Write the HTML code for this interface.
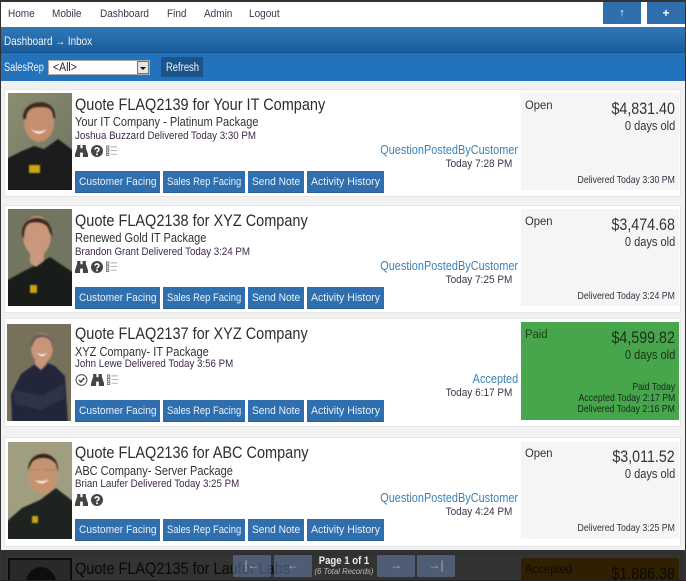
<!DOCTYPE html>
<html><head><meta charset="utf-8"><style>
html,body{margin:0;padding:0;overflow:hidden}
body{width:686px;height:581px;background:#f1f1f1;font-family:"Liberation Sans",sans-serif;color:#333}
#p{position:absolute;left:0;top:0;width:686px;height:581px;overflow:hidden;background:#f1f1f1}
.a{position:absolute}
.ph{position:absolute}
.ph g{filter:blur(.7px)}
.t{position:absolute;white-space:nowrap;line-height:20px;height:20px;transform-origin:0 50%;transform:scaleX(.91)}
.r{transform-origin:100% 50%}
.card{position:absolute;left:4px;width:677px;background:#fff;border:1px solid #e6e6e6;box-sizing:border-box}
.panel{position:absolute;left:521px;width:158px;height:97px;background:#f5f5f5}
.btn{position:absolute;height:22px;background:#2f6fad;border-bottom:1px solid #285f96;box-sizing:border-box}
.nav{font-size:11px;color:#3d3350;top:4px}
.bt{font-size:11.2px;color:#e8f1fa}
.sr{transform:scaleX(.84)}
.ah{transform:scaleX(.94)}
.ti{font-size:16.2px;color:#2d2d2d;transform:scaleX(.895)}
.su{font-size:12.8px;color:#333;transform:scaleX(.86)}
.re{font-size:10.7px;color:#3f2b47}
.st{font-size:13px;color:#3a82b8;transform:scaleX(.84)}
.tm{font-size:11px;color:#3f3348}
.op{font-size:12.4px;color:#333}
.am{font-size:16.4px;color:#333;transform:scaleX(.87)}
.da{font-size:13px;color:#333;transform:scaleX(.85)}
.de{font-size:10.4px;color:#3a2e40;transform:scaleX(.84)}
.foot{position:absolute;left:0;top:550px;width:686px;height:31px;background:rgba(0,0,0,.8)}
.pg{position:absolute;top:555px;height:22px;width:38px;background:rgba(100,125,170,.55);color:#a9b2c0;font-size:12px;line-height:21px;text-align:center}
</style></head><body><div id="p">
<svg width="0" height="0" style="position:absolute"><defs>
<symbol id="bino" viewBox="0 0 12 11"><path fill="#444" d="M2 0h3v3h2V0h3v2.5l2 6V11H7.3V7H4.7v4H0V8.5l2-6z"/></symbol>
<symbol id="q" viewBox="0 0 12 12"><circle cx="6" cy="6" r="6" fill="#444"/><path fill="none" stroke="#fff" stroke-width="1.6" d="M4 4.6C4 2.4 8 2.4 8 4.6 8 6 6 6 6 7.5"/><rect x="5.1" y="8.5" width="1.8" height="1.7" fill="#fff"/></symbol>
<symbol id="l" viewBox="0 0 12 12"><g fill="none" stroke="#777"><rect x=".5" y=".5" width="2.5" height="2.5"/><rect x=".5" y="4.5" width="2.5" height="2.5"/><rect x=".5" y="8.5" width="2.5" height="2.5"/></g><path stroke="#aaa" d="M5 1.5h7M5 5.5h7M5 9.5h7"/></symbol>
<symbol id="c" viewBox="0 0 12 12"><circle cx="6" cy="6" r="5.4" fill="none" stroke="#444"/><path fill="none" stroke="#444" stroke-width="1.5" d="M3.4 6l2 2 3.4-4"/></symbol>
<linearGradient id="w" x1="0" x2="1" y1="0" y2="1"><stop offset="0" stop-color="#8b8d72"/><stop offset="1" stop-color="#6f7460"/></linearGradient>
</defs></svg>

<!-- nav -->
<div class="a" style="left:0;top:2px;width:686px;height:25px;background:#fff"></div>
<span class="t nav" style="left:8px">Home</span><span class="t nav" style="left:52px">Mobile</span><span class="t nav" style="left:100px">Dashboard</span><span class="t nav" style="left:167px">Find</span><span class="t nav" style="left:204px">Admin</span><span class="t nav" style="left:249px">Logout</span>
<div class="a" style="left:603px;top:2px;width:38px;height:22px;background:#2f6fad;color:#fff;font-size:11px;line-height:22px;text-align:center;font-weight:bold">↑</div>
<div class="a" style="left:647px;top:2px;width:38px;height:22px;background:#2f6fad;color:#fff;font-size:12px;line-height:22px;text-align:center;font-weight:bold">+</div>

<!-- header -->
<div class="a" style="left:0;top:27px;width:686px;height:26px;background:linear-gradient(#3278b5,#1a5d9f);border-bottom:1px solid #14508a;box-sizing:border-box"></div>
<span class="t" style="left:4px;top:31px;font-size:11.8px;color:#f0f5fa;transform:scaleX(.84)">Dashboard → Inbox</span>
<div class="a" style="left:0;top:53px;width:686px;height:28px;background:#2272bc"></div>
<span class="t" style="left:4px;top:58px;font-size:11.5px;color:#f0f5fa;transform:scaleX(.8)">SalesRep</span>
<div class="a" style="left:48px;top:60px;width:102px;height:15px;background:#fff;box-sizing:border-box;border:1px solid #aaa"></div>
<span class="t" style="left:53px;top:58px;font-size:11.5px;color:#222">&lt;All&gt;</span>
<div class="a" style="left:137px;top:61px;width:12px;height:13px;background:#e4e4e4;border:1px solid #777;box-sizing:border-box"></div>
<div class="a" style="left:140px;top:67px;border:3px solid transparent;border-top:3px solid #111"></div>
<div class="a" style="left:161px;top:57px;width:42px;height:20px;background:#1a5488"></div>
<span class="t" style="left:166px;top:58px;font-size:11.5px;color:#eef3f8;transform:scaleX(.82)">Refresh</span>

<!-- card 1 -->
<div class="card" style="top:89px;height:108px"></div>
<svg class="ph" style="left:8px;top:93px" width="64" height="97" viewBox="0 0 64 97"><rect width="64" height="97" fill="url(#w)"/><g><path fill="#1c1c1c" d="M-2 99V66l16-8 12-5 10 3 14-10 16 12v41z"/><ellipse cx="31" cy="29" rx="15" ry="20" fill="#c48e6f"/><path fill="#3a2a20" d="M15 26C13 5 50 2 47 26L45 24C45 14 38 14 32 14 24 14 19 16 18 26z"/><path fill="#fff" d="M23 36q8 5 16 0-8 9-16 0z"/><rect x="21" y="72" width="11" height="8" fill="#c9a516"/></g></svg>
<span class="t ti" style="left:75px;top:95px">Quote FLAQ2139 for Your IT Company</span>
<span class="t su" style="left:75px;top:112px">Your IT Company - Platinum Package</span>
<span class="t re" style="left:75px;top:126px">Joshua Buzzard Delivered Today 3:30 PM</span>
<svg class="a" style="left:75px;top:145px" width="13" height="12"><use href="#bino"/></svg><svg class="a" style="left:91px;top:145px" width="12" height="12"><use href="#q"/></svg><svg class="a" style="left:106px;top:145px" width="11" height="12"><use href="#l"/></svg>
<div class="btn" style="left:75px;top:171px;width:85px"></div><div class="btn" style="left:163px;top:171px;width:82px"></div><div class="btn" style="left:248px;top:171px;width:56px"></div><div class="btn" style="left:307px;top:171px;width:77px"></div>
<span class="t bt" style="left:79px;top:172px">Customer Facing</span><span class="t bt sr" style="left:167px;top:172px">Sales Rep Facing</span><span class="t bt" style="left:252px;top:172px">Send Note</span><span class="t bt ah" style="left:311px;top:172px">Activity History</span>
<span class="t st r" style="right:168px;top:140px">QuestionPostedByCustomer</span>
<span class="t tm r" style="right:174px;top:154px">Today 7:28 PM</span>
<div class="panel" style="top:93px"></div>
<span class="t op" style="left:525px;top:95px">Open</span>
<span class="t am r" style="right:11px;top:99px">$4,831.40</span>
<span class="t da r" style="right:11px;top:116px">0 days old</span>
<span class="t de r" style="right:11px;top:171px">Delivered Today 3:30 PM</span>

<!-- card 2 -->
<div class="card" style="top:205px;height:108px"></div>
<svg class="ph" style="left:8px;top:209px" width="64" height="97" viewBox="0 0 64 97"><rect width="64" height="97" fill="#72755f"/><g><path fill="#191d1a" d="M-2 99V72l18-10 12-6 14-8 12 8 12 8v35z"/><path fill="#c69a80" d="M22 42h14v10l-8 6-6-4z"/><ellipse cx="29" cy="27" rx="14" ry="20" fill="#c9977a"/><path fill="#3d2a1e" d="M14 26C12 4 46 2 44 28L41 22C40 14 30 12 22 14 17 16 16 22 16 30z"/><rect x="22" y="76" width="7" height="8" fill="#c9a516"/></g></svg>
<span class="t ti" style="left:75px;top:211px">Quote FLAQ2138 for XYZ Company</span>
<span class="t su" style="left:75px;top:228px">Renewed Gold IT Package</span>
<span class="t re" style="left:75px;top:242px">Brandon Grant Delivered Today 3:24 PM</span>
<svg class="a" style="left:75px;top:261px" width="13" height="12"><use href="#bino"/></svg><svg class="a" style="left:91px;top:261px" width="12" height="12"><use href="#q"/></svg><svg class="a" style="left:106px;top:261px" width="11" height="12"><use href="#l"/></svg>
<div class="btn" style="left:75px;top:287px;width:85px"></div><div class="btn" style="left:163px;top:287px;width:82px"></div><div class="btn" style="left:248px;top:287px;width:56px"></div><div class="btn" style="left:307px;top:287px;width:77px"></div>
<span class="t bt" style="left:79px;top:288px">Customer Facing</span><span class="t bt sr" style="left:167px;top:288px">Sales Rep Facing</span><span class="t bt" style="left:252px;top:288px">Send Note</span><span class="t bt ah" style="left:311px;top:288px">Activity History</span>
<span class="t st r" style="right:168px;top:256px">QuestionPostedByCustomer</span>
<span class="t tm r" style="right:174px;top:270px">Today 7:25 PM</span>
<div class="panel" style="top:209px"></div>
<span class="t op" style="left:525px;top:211px">Open</span>
<span class="t am r" style="right:11px;top:215px">$3,474.68</span>
<span class="t da r" style="right:11px;top:232px">0 days old</span>
<span class="t de r" style="right:11px;top:287px">Delivered Today 3:24 PM</span>

<!-- card 3 -->
<div class="card" style="top:318px;height:109px"></div>
<svg class="ph" style="left:7px;top:324px" width="64" height="97" viewBox="0 0 64 97"><rect width="64" height="97" fill="#77705a"/><g><path fill="#22263a" d="M5 99L4 70l10-20 14-10 10-2 10 4 10 10 3 47z"/><path fill="#2e3348" d="M6 66l30 6 20-12 2 14-24 12-26-6z"/><path fill="#c79378" d="M28 32h12v8l-6 6-6-5z"/><ellipse cx="35" cy="24" rx="11" ry="15" fill="#c9957a"/><path fill="#6a5f58" d="M24 24C21 5 49 5 46 26L44 18C41 12 32 12 28 16z"/><path fill="#fff" d="M30 29q5 3 10 0-5 6-10 0z"/></g></svg>
<span class="t ti" style="left:75px;top:324px">Quote FLAQ2137 for XYZ Company</span>
<span class="t su" style="left:75px;top:342px">XYZ Company- IT Package</span>
<span class="t re" style="left:75px;top:354px">John Lewe Delivered Today 3:56 PM</span>
<svg class="a" style="left:75px;top:374px" width="13" height="12"><use href="#c"/></svg><svg class="a" style="left:91px;top:374px" width="13" height="12"><use href="#bino"/></svg><svg class="a" style="left:107px;top:374px" width="11" height="12"><use href="#l"/></svg>
<div class="btn" style="left:75px;top:400px;width:85px"></div><div class="btn" style="left:163px;top:400px;width:82px"></div><div class="btn" style="left:248px;top:400px;width:56px"></div><div class="btn" style="left:307px;top:400px;width:77px"></div>
<span class="t bt" style="left:79px;top:401px">Customer Facing</span><span class="t bt sr" style="left:167px;top:401px">Sales Rep Facing</span><span class="t bt" style="left:252px;top:401px">Send Note</span><span class="t bt ah" style="left:311px;top:401px">Activity History</span>
<span class="t st r" style="right:168px;top:369px">Accepted</span>
<span class="t tm r" style="right:174px;top:383px">Today 6:17 PM</span>
<div class="panel" style="top:322px;height:98px;background:#47a64b"></div>
<span class="t op" style="left:525px;top:324px;color:#1f3a20">Paid</span>
<span class="t am r" style="right:11px;top:328px;color:#1c2e1c">$4,599.82</span>
<span class="t da r" style="right:11px;top:345px;color:#1c2e1c">0 days old</span>
<span class="t de r" style="right:11px;top:378px;color:#14281a">Paid Today</span>
<span class="t de r" style="right:11px;top:389px;color:#14281a">Accepted Today 2:17 PM</span>
<span class="t de r" style="right:11px;top:400px;color:#14281a">Delivered Today 2:16 PM</span>

<!-- card 4 -->
<div class="card" style="top:437px;height:110px"></div>
<svg class="ph" style="left:8px;top:442px" width="64" height="97" viewBox="0 0 64 97"><rect width="64" height="97" fill="#a09e80"/><g><path fill="#1e2320" d="M-2 99V80l16-14 18-8 16-12 18 14v39z"/><ellipse cx="35" cy="31" rx="15" ry="21" fill="#c6936f"/><path fill="#2f2620" d="M20 28C20 6 52 6 50 30L48 22C42 14 30 14 24 20z"/><path fill="none" stroke="#8a8a80" d="M19 28h12m4 0h13"/><path fill="#fff" d="M27 38q7 3 14-1-7 8-14 1z"/><rect x="24" y="74" width="6" height="7" fill="#c9a516"/></g></svg>
<span class="t ti" style="left:75px;top:443px">Quote FLAQ2136 for ABC Company</span>
<span class="t su" style="left:75px;top:461px">ABC Company- Server Package</span>
<span class="t re" style="left:75px;top:474px">Brian Laufer Delivered Today 3:25 PM</span>
<svg class="a" style="left:75px;top:494px" width="13" height="12"><use href="#bino"/></svg><svg class="a" style="left:91px;top:494px" width="12" height="12"><use href="#q"/></svg>
<div class="btn" style="left:75px;top:519px;width:85px"></div><div class="btn" style="left:163px;top:519px;width:82px"></div><div class="btn" style="left:248px;top:519px;width:56px"></div><div class="btn" style="left:307px;top:519px;width:77px"></div>
<span class="t bt" style="left:79px;top:520px">Customer Facing</span><span class="t bt sr" style="left:167px;top:520px">Sales Rep Facing</span><span class="t bt" style="left:252px;top:520px">Send Note</span><span class="t bt ah" style="left:311px;top:520px">Activity History</span>
<span class="t st r" style="right:168px;top:488px">QuestionPostedByCustomer</span>
<span class="t tm r" style="right:174px;top:502px">Today 4:24 PM</span>
<div class="panel" style="top:442px"></div>
<span class="t op" style="left:525px;top:443px">Open</span>
<span class="t am r" style="right:11px;top:447px">$3,011.52</span>
<span class="t da r" style="right:11px;top:464px">0 days old</span>
<span class="t de r" style="right:11px;top:519px">Delivered Today 3:25 PM</span>

<!-- card 5 behind footer -->
<div class="card" style="top:554px;height:27px;border-bottom:0"></div>
<svg class="a" style="left:8px;top:558px" width="64" height="23"><rect x="1" y="1" width="62" height="30" fill="#ccc" stroke="#444" stroke-width="2"/><ellipse cx="33" cy="28" rx="16" ry="19" fill="#444"/></svg>
<span class="t ti" style="left:75px;top:559px">Quote FLAQ2135 for Laufer Labs</span>
<div class="panel" style="top:558px;height:23px;background:#f0a000"></div>
<span class="t op" style="left:525px;top:559px;color:#333">Accepted</span>
<span class="t am r" style="right:11px;top:564px">$1,886.38</span>

<!-- footer -->
<div class="foot"></div>
<div class="pg" style="left:233px">|←</div><div class="pg" style="left:274px">←</div>
<div class="pg" style="left:377px">→</div><div class="pg" style="left:417px">→|</div>
<div class="a" style="left:300px;top:554px;width:88px;text-align:center;font-size:11px;line-height:14px;font-weight:bold;color:#eee;transform:scaleX(.87)">Page 1 of 1</div>
<div class="a" style="left:300px;top:565px;width:88px;text-align:center;font-size:8.6px;line-height:12px;font-style:italic;color:#bbb;transform:scaleX(.9)">(6 Total Records)</div>

<!-- window edge -->
<div class="a" style="left:0;top:0;width:686px;height:2px;background:#333"></div>
<div class="a" style="left:0;top:0;width:1px;height:581px;background:#333"></div>
<div class="a" style="right:0;top:0;width:1px;height:581px;background:#333"></div>
<div class="a" style="left:0;bottom:0;width:686px;height:1px;background:#222"></div>
</div></body></html>
